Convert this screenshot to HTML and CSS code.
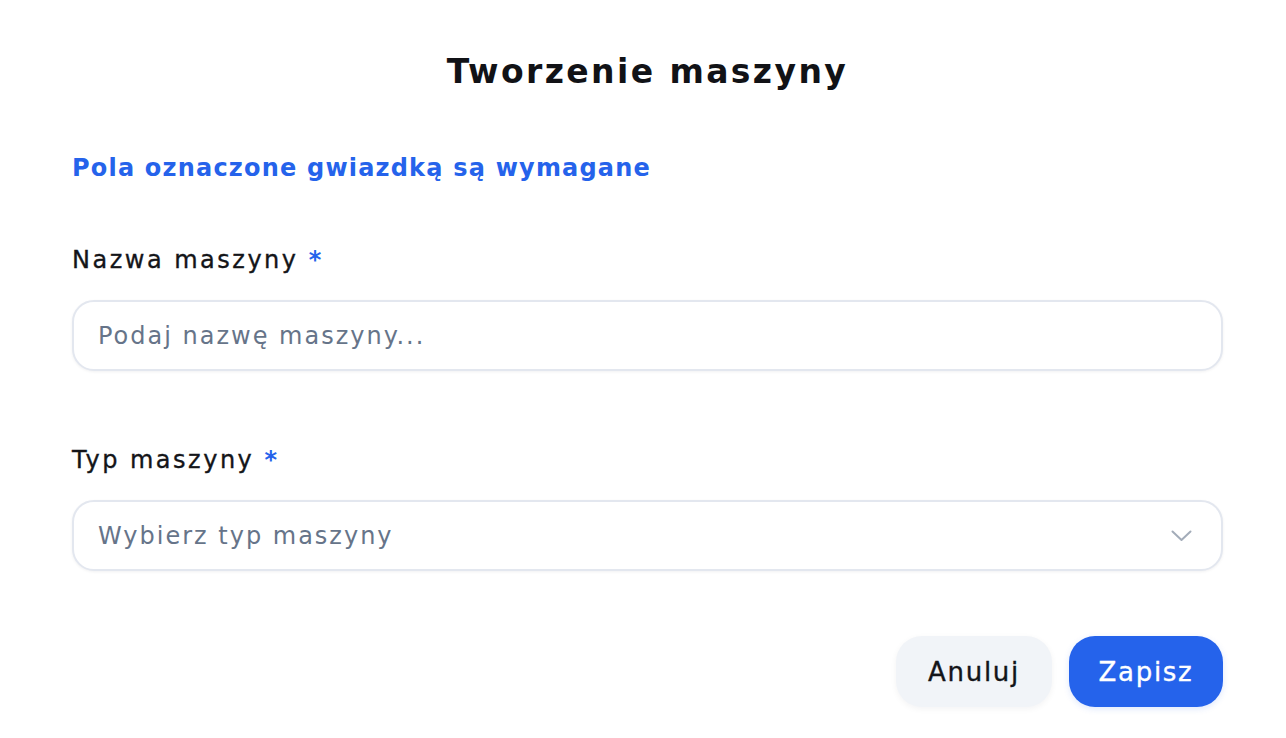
FILE: index.html
```html
<!DOCTYPE html>
<html lang="pl">
<head>
<meta charset="utf-8">
<title>Tworzenie maszyny</title>
<link rel="stylesheet" href="styles.css">
</head>
<body>
<div class="modal">
  <h1 class="title">Tworzenie maszyny</h1>
  <p class="note">Pola oznaczone gwiazdką są wymagane</p>
  <div class="field">
    <label class="label" for="name">Nazwa maszyny <span class="req">*</span></label>
    <input class="control" id="name" type="text" placeholder="Podaj nazwę maszyny...">
  </div>
  <div class="field field-second">
    <label class="label" for="type">Typ maszyny <span class="req">*</span></label>
    <div class="control select" id="type">
      <span class="placeholder">Wybierz typ maszyny</span>
      <svg class="chevron" width="21" height="12" viewBox="0 0 21 12" fill="none"><path d="M1.5 1.5 L10.5 10 L19.5 1.5" stroke="#a3acb9" stroke-width="2" stroke-linecap="round" stroke-linejoin="round"/></svg>
    </div>
  </div>
  <div class="actions">
    <button class="btn btn-cancel" type="button">Anuluj</button>
    <button class="btn btn-save" type="button">Zapisz</button>
  </div>
</div>
</body>
</html>
```

FILE: styles.css
```css
* { box-sizing: border-box; }
html, body { margin: 0; padding: 0; background: #ffffff; }
body {
  font-family: "DejaVu Sans", "Noto Sans", sans-serif;
  color: #141519;
  width: 1286px;
  height: 738px;
  overflow: hidden;
}
.modal {
  padding: 40px 63px 0 72px;
  display: flex;
  flex-direction: column;
}
.title {
  margin: 0;
  text-align: center;
  font-size: 33px;
  font-weight: 700;
  letter-spacing: 2.4px;
  line-height: 64px;
  color: #111216;
}
.note {
  margin: 48px 0 0;
  font-size: 24px;
  font-weight: 700;
  letter-spacing: 1.2px;
  line-height: 32px;
  color: #2563eb;
}
.field { margin-top: 60px; display: flex; flex-direction: column; gap: 24px; }
.field-second { margin-top: 73px; }
.label {
  font-size: 24px;
  line-height: 32px;
  font-weight: 500;
  letter-spacing: 2.5px;
  color: #141519;
  -webkit-text-stroke: 0.35px currentColor;
}
.req { color: #2563eb; font-weight: 700; letter-spacing: 0; -webkit-text-stroke: 0; }
.control {
  height: 71px;
  width: 100%;
  border: 2px solid #e3e7ef;
  border-radius: 22px;
  box-shadow: 0 1px 3px rgba(15, 23, 42, 0.06);
  background: #fff;
  padding: 0 24px;
  font-family: inherit;
  font-size: 24px;
  letter-spacing: 2px;
  color: #141519;
  outline: none;
}
.control::placeholder { color: #667489; }
.select {
  display: flex;
  align-items: center;
  justify-content: space-between;
  padding-right: 29px;
}
.placeholder { color: #667489; }
.actions {
  margin-top: 65px;
  display: flex;
  justify-content: flex-end;
  gap: 17px;
}
.btn {
  height: 71px;
  border: none;
  border-radius: 26px;
  font-family: inherit;
  font-size: 26px;
  font-weight: 500;
  letter-spacing: 1.7px;
  padding: 0;
  -webkit-text-stroke: 0.35px currentColor;
}
.btn-cancel {
  width: 156px;
  background: #f1f4f8;
  color: #141519;
  box-shadow: 0 2px 6px rgba(15, 23, 42, 0.05);
}
.btn-save {
  width: 154px;
  background: #2563eb;
  color: #ffffff;
  box-shadow: 0 2px 6px rgba(37, 99, 235, 0.15);
}
```
